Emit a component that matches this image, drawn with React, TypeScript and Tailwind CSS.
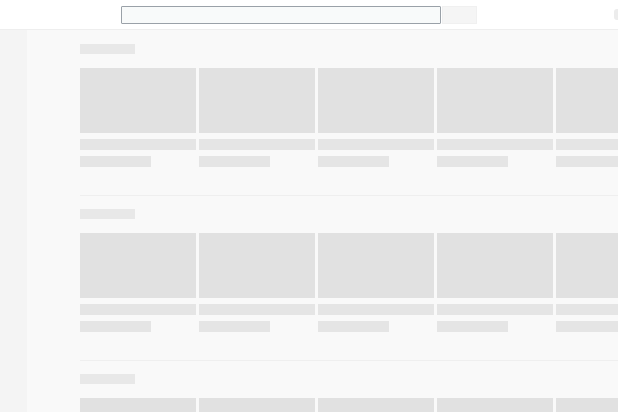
import React from "react"

const SECTIONS = [0, 1, 2]
const CARDS = [0, 1, 2, 3, 4]

// Tarjeta de vídeo en estado de carga
function SkeletonCard() {
  return (
    <div className="flex flex-col w-[116px] shrink-0">
      <div className="h-[65px] bg-[#e1e1e1]" />
      <div className="mt-[6px] h-[11px] bg-[#e5e5e5]" />
      <div className="mt-[6px] h-[11px] w-[71px] bg-[#e5e5e5]" />
    </div>
  )
}

function SkeletonShelf({ last }: { last: boolean }) {
  return (
    <section className="flex flex-col">
      <div className="h-[10px] w-[55px] bg-[#e8e8e8]" />
      <div className="mt-[14px] flex gap-[3px]">
        {CARDS.map((c) => (
          <SkeletonCard key={c} />
        ))}
      </div>
      {!last && <div className="mt-[28px] mb-[13px] h-px bg-[#efefef]" />}
    </section>
  )
}

export default function App() {
  return (
    <div className="w-[618px] h-[412px] overflow-hidden flex flex-col bg-[#f9f9f9] font-['Liberation_Sans',sans-serif]">
      {/* Barra superior */}
      <header className="h-[30px] shrink-0 bg-white border-b border-[#eeeeee] flex items-center relative">
        <div className="ml-[121px] flex items-center">
          <div className="w-[320px] h-[18px] bg-[#f8fafa] border border-[#9aa1a8] rounded-[1px]" />
          <div className="ml-px w-[35px] h-[18px] bg-[#f5f5f5] border border-[#f0f0f0]" />
        </div>
        <div className="absolute left-[614px] top-[9px] w-[8px] h-[11px] rounded-[3px] bg-[#ececec]" />
      </header>

      <div className="flex flex-1 overflow-hidden">
        {/* Barra lateral */}
        <aside className="w-[27px] shrink-0 bg-[#f4f4f4]" />

        {/* Contenido */}
        <main className="flex-1 pl-[53px] pt-[14px] flex flex-col">
          {SECTIONS.map((s) => (
            <SkeletonShelf key={s} last={s === SECTIONS.length - 1} />
          ))}
        </main>
      </div>
    </div>
  )
}
